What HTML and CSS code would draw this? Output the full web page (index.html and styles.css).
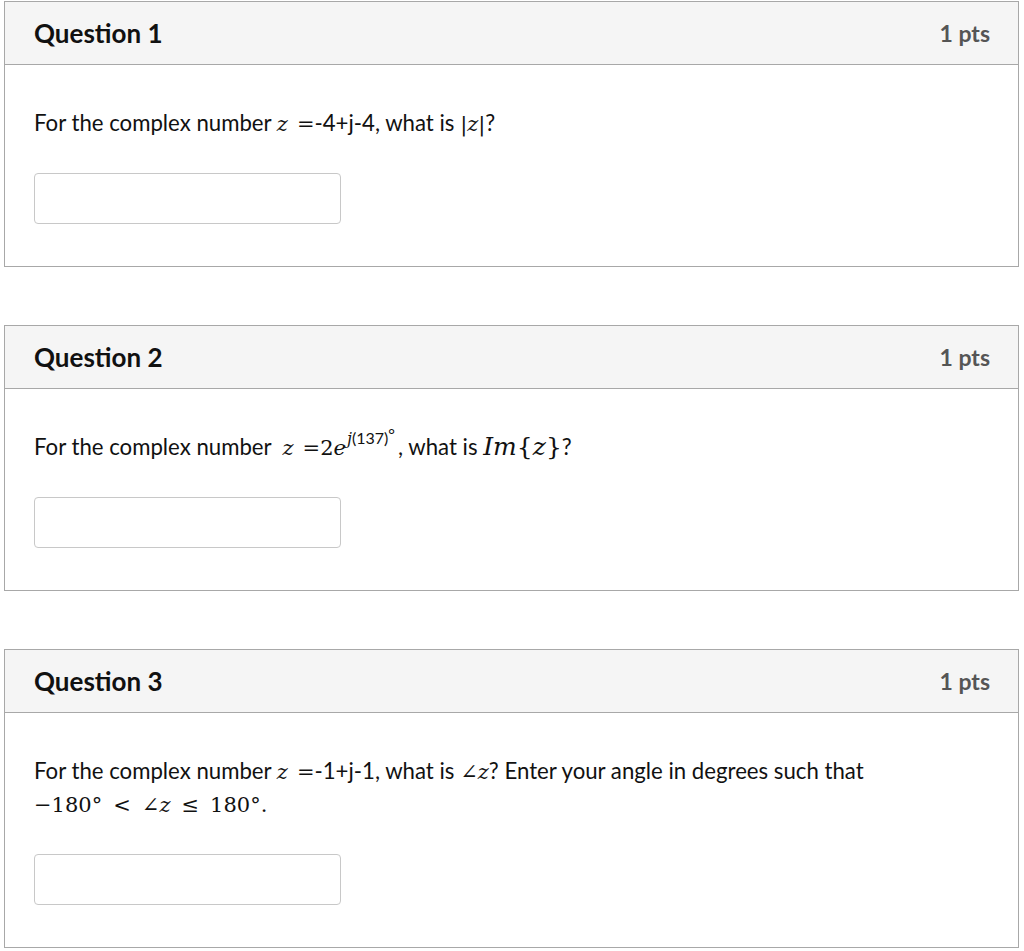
FILE: index.html
```html
<!DOCTYPE html>
<html>
<head>
<meta charset="utf-8">
<link rel="stylesheet" href="styles.css">
</head>
<body>
<div class="page">
  <div class="card">
    <div class="head"><span class="title">Question 1</span><span class="pts">1 pts</span></div>
    <div class="body">
      <p class="q">For the complex number <span class="m"><i>z</i><span class="rel">=</span></span>-4+j-4, what is <span class="m">|<i>z</i>|</span>?</p>
      <div class="field"></div>
    </div>
  </div>
  <div class="card">
    <div class="head"><span class="title">Question 2</span><span class="pts">1 pts</span></div>
    <div class="body">
      <p class="q">For the complex number &nbsp;<span class="m"><i>z</i><span class="rel">=</span>2<i>e</i></span><sup class="sup"><i class="mj">j</i>(137)<span class="deg">°</span></sup>, what is <span class="m big"><i>Im</i>{<i>z</i>}</span>?</p>
      <div class="field"></div>
    </div>
  </div>
  <div class="card">
    <div class="head"><span class="title">Question 3</span><span class="pts">1 pts</span></div>
    <div class="body">
      <p class="q">For the complex number <span class="m"><i>z</i><span class="rel">=</span></span>-1+j-1, what is <span class="m">∠<i>z</i></span>? Enter your angle in degrees such that<br><span class="m">−180°<span class="rel wide">&lt;</span>∠<i>z</i><span class="rel wide">≤</span>180°.</span></p>
      <div class="field"></div>
    </div>
  </div>
</div>
</body>
</html>
```
FILE: styles.css
```css
html, body {
  margin: 0;
  padding: 0;
  background: #ffffff;
}
body {
  font-family: Lato, "Noto Sans", sans-serif;
  color: #111111;
}
.page {
  padding: 1px 4px 0 4px;
  width: 1015px;
  display: flex;
  flex-direction: column;
  gap: 58px;
}
.card {
  border: 1px solid #a8a8a8;
  background: #ffffff;
}
.head {
  height: 62px;
  background: #f5f5f5;
  border-bottom: 1px solid #a8a8a8;
  display: flex;
  align-items: center;
  justify-content: space-between;
  padding: 0 28px 0 29px;
}
.title {
  font-weight: 700;
  font-size: 26px;
  color: #111111;
}
.pts {
  font-weight: 700;
  font-size: 23px;
  color: #555555;
}
.body {
  padding: 42px 29px 42px 29px;
}
.q {
  margin: 0 0 33px 0;
  font-size: 22.2px;
  line-height: 32px;
}
.m {
  font-family: "DejaVu Serif", "Liberation Serif", serif;
  font-size: 21px;
}
.m i {
  font-style: italic;
}
.rel {
  margin: 0 0 0 9px;
}
.rel.wide {
  margin: 0 11px;
}
.big {
  font-size: 25px;
}
.sup {
  font-size: 16px;
  line-height: 0;
  vertical-align: 11px;
  margin-left: 1px;
  margin-right: 3px;
}
.mj {
  font-family: "DejaVu Serif", serif;
  font-size: 16px;
}
.deg {
  font-size: 16px;
  vertical-align: 4px;
}
.field {
  width: 305px;
  height: 49px;
  border: 1px solid #c8c8c8;
  border-radius: 4px;
  background: #ffffff;
}
```
